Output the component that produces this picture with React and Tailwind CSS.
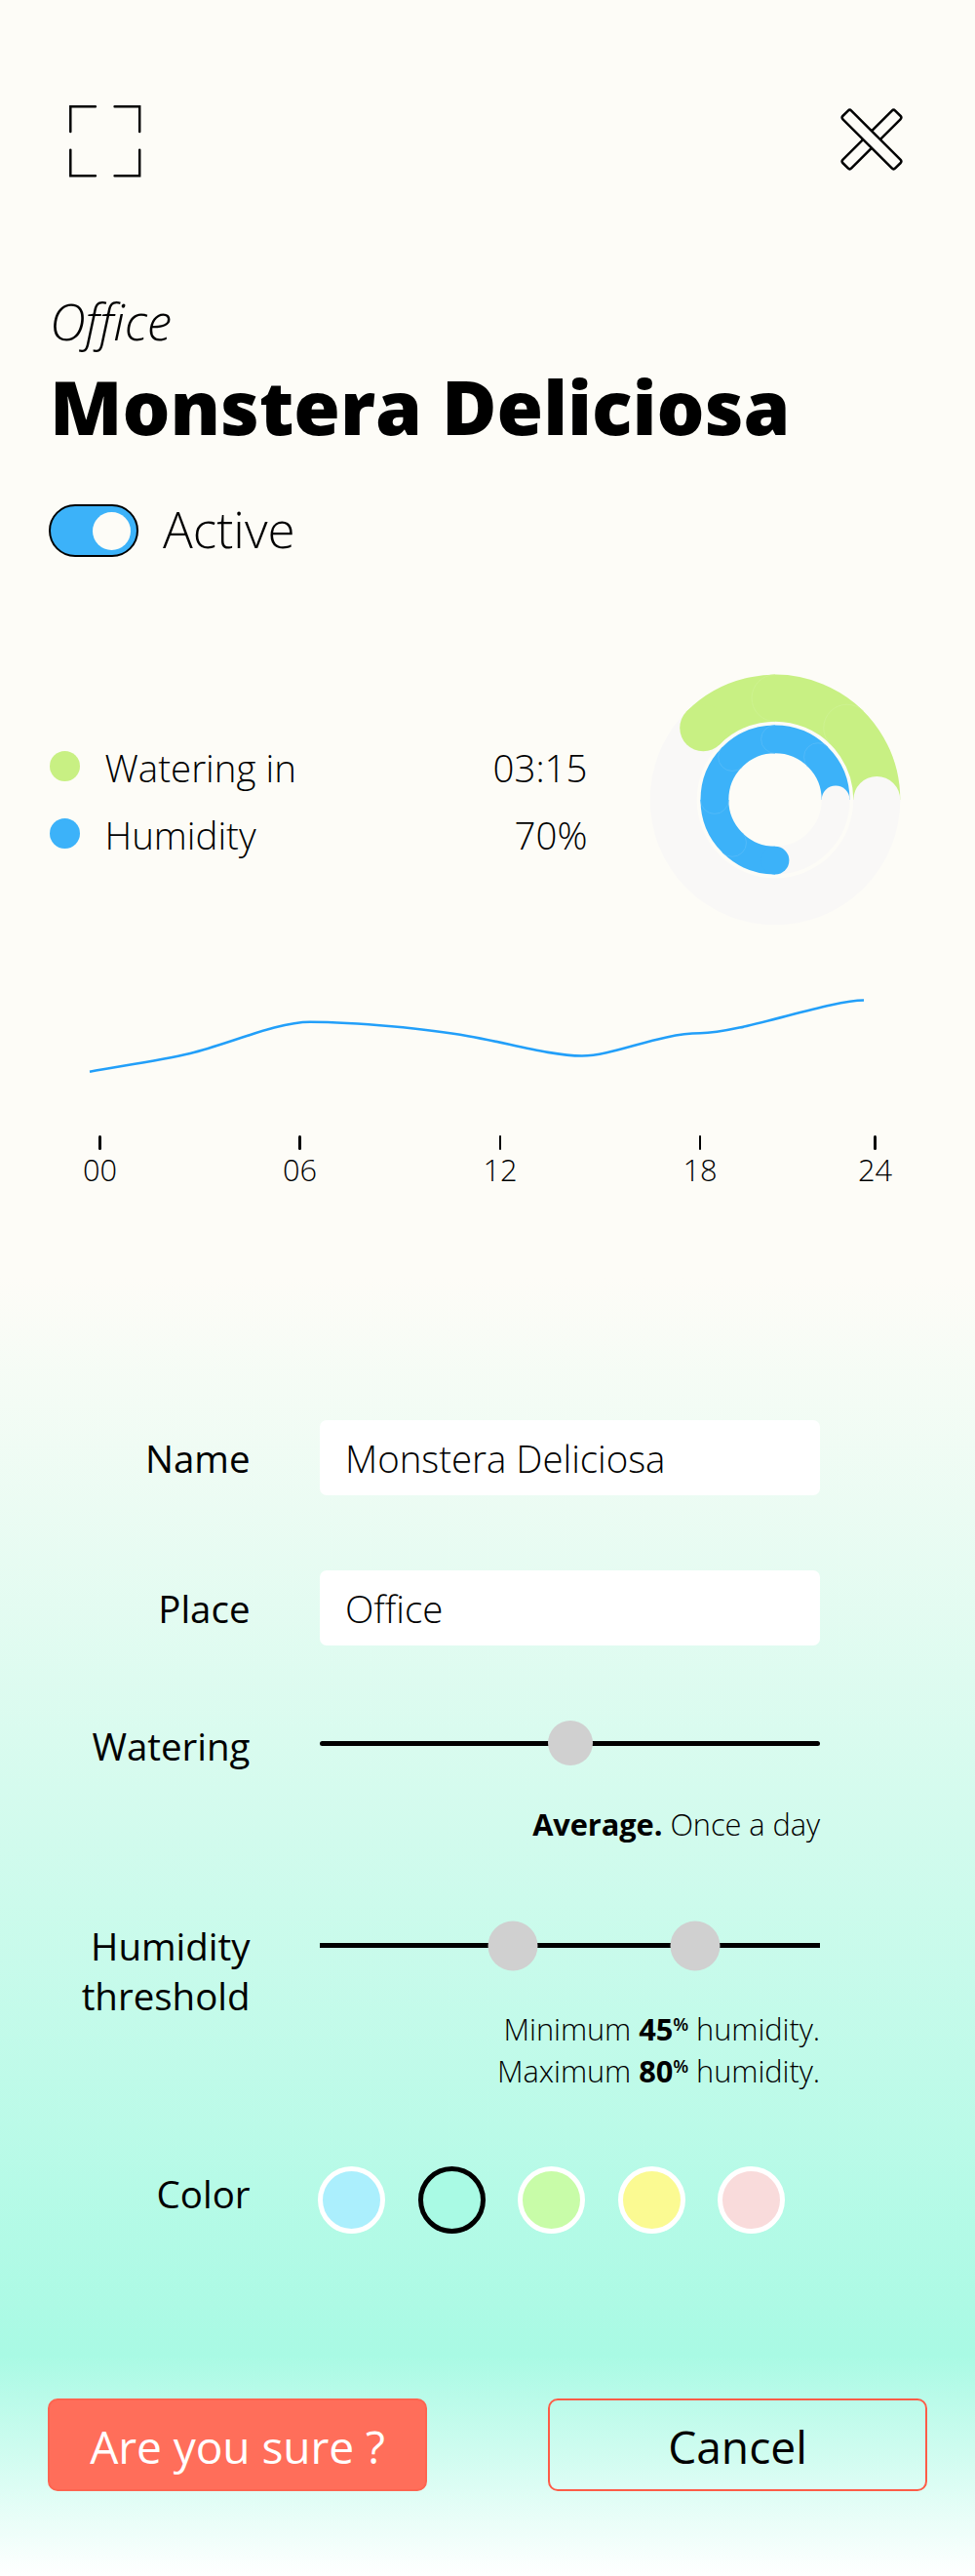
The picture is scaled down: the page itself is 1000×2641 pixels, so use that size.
const FONT = "font-['Open_Sans',sans-serif]";

function ExpandIcon() {
  return (
    <svg className="block w-[74px] h-[74px]" viewBox="0 0 74 74" fill="none" stroke="#000" strokeWidth="2.5" strokeLinecap="round">
      <path d="M1 27V1H27M47 1H73V27M73 46V73H47M27 73H1V46" transform="translate(.3 .3) scale(.985)" />
    </svg>
  );
}

function CloseIcon() {
  return (
    <svg className="block w-[66px] h-[66px]" viewBox="-33 -33 66 66" fill="#fdfcf7" stroke="#000" strokeWidth="2.5">
      <rect x="-38" y="-6.2" width="76" height="12.4" rx="2.5" transform="rotate(-45)" />
      <rect x="-38" y="-6.2" width="76" height="12.4" rx="2.5" transform="rotate(45)" />
    </svg>
  );
}

function Seam({ angle, radius, cap, color }) {
  return (
    <path
      d={`M${radius + cap} 0A${cap} ${cap} 0 0 0 ${radius - cap} 0`}
      transform={`rotate(${-angle})`}
      fill="none"
      stroke={color}
      strokeWidth="0.8"
    />
  );
}

function Donut() {
  return (
    <svg className="block w-[260px] h-[260px]" viewBox="-130 -130 260 260" fill="none">
      <circle r="104.3" stroke="#f9f8f7" strokeWidth="48" />
      <circle r="62.1" stroke="#f9f8f7" strokeWidth="28.8" />
      <path d="M104.3 0A104.3 104.3 0 0 0 -73.75 -73.75" stroke="#c8f083" strokeWidth="48" />
      <circle cx="-73.75" cy="-73.75" r="24" fill="#c8f083" />
      <path d="M62.1 0A62.1 62.1 0 1 0 0 62.1" stroke="#3cb2f9" strokeWidth="28.8" />
      <circle cx="0" cy="62.1" r="14.4" fill="#3cb2f9" />
      <circle cx="104.3" cy="0" r="24" fill="#f9f8f7" />
      <circle cx="62.1" cy="0" r="14.4" fill="#f9f8f7" />
      {[45, 90].map((a) => <Seam key={a} angle={a} radius={104.3} cap={24} color="#cef292" />)}
      {[45, 90, 135, 180, 225].map((a) => <Seam key={a} angle={a} radius={62.1} cap={14.4} color="#55bbf9" />)}
    </svg>
  );
}

function Metric({ dot, label, value }) {
  return (
    <div className="flex h-[69px] items-center text-[38.46px] leading-[52px] font-light">
      <span className={`-mt-[3px] size-[31px] rounded-full ${dot}`} />
      <span className="ml-[25.5px]">{label}</span>
      <span className="ml-auto">{value}</span>
    </div>
  );
}

function Row({ label, className, children }) {
  return (
    <div className={`flex ${className}`}>
      <div className="w-[256.5px] shrink-0 pt-[14px] text-right text-[38.46px] leading-[51.3px]">{label}</div>
      <div className="ml-[71.5px] w-[513px]">{children}</div>
    </div>
  );
}

function Field({ value }) {
  return (
    <div className="flex h-[77px] items-center rounded-[7px] bg-white pt-[2px] pl-[26px] text-[38.46px] tracking-[-0.04px] font-light">{value}</div>
  );
}

function Thumb({ className }) {
  return <span className={`absolute top-1/2 -translate-x-1/2 -translate-y-1/2 rounded-full bg-[#d0d0d0] ${className}`} />;
}

function Percent({ value }) {
  return (
    <b className="font-bold">
      {value}
      <span className="relative -top-[10px] text-[18.5px] leading-none font-semibold">%</span>
    </b>
  );
}

const HOURS = [
  { label: "00", width: "w-[205px]" },
  { label: "06", width: "w-[205.5px]" },
  { label: "12", width: "w-[205px]" },
  { label: "18", width: "w-[179.5px]" },
  { label: "24", width: "w-0" },
];

const SWATCHES = [
  "bg-[#abeffd] border-white",
  "bg-[#a9fae4] border-black",
  "bg-[#c8fca8] border-white",
  "bg-[#fbfa92] border-white",
  "bg-[#f9dbdb] border-white",
];

export default function App() {
  return (
    <div className={`${FONT} h-[2641px] w-[1000px] overflow-hidden bg-[linear-gradient(180deg,#fdfcf7_0px,#fdfcf7_1310px,#a9fae4_2415px,#ffffff_2641px)] text-black`}>
      <header className="flex h-[290px] items-start justify-between pt-[108px] pr-[73px] pl-[71px]">
        <ExpandIcon />
        <div className="pt-[2px]"><CloseIcon /></div>
      </header>

      <section className="pl-[51px]">
        <p className="h-[78px] text-[51.28px] leading-[78px] tracking-[-0.2px] font-light italic [font-variant-ligatures:common-ligatures]">Office</p>
        <h1 className="mt-[-4px] h-[105px] text-[77px] leading-[105px] font-extrabold">Monstera Deliciosa</h1>
        <div className="mt-[48px] flex h-[54px] items-center">
          <span className="-ml-px flex h-[54px] w-[92px] items-center justify-end rounded-full border-[2.5px] border-black bg-[#3cb2f9] pr-[6px]">
            <span className="size-[39px] rounded-full bg-[#fdfcf7]" />
          </span>
          <span className="-mt-[4px] ml-[25px] text-[51.28px] leading-[70px] font-light">Active</span>
        </div>
      </section>

      <section className="mt-[119px] flex h-[260px] pl-[51px]">
        <div className="w-[551.5px] pt-[62.5px]">
          <Metric dot="bg-[#c8f083]" label="Watering in" value="03:15" />
          <Metric dot="bg-[#3cb2f9]" label="Humidity" value="70%" />
        </div>
        <div className="ml-[62.5px]"><Donut /></div>
      </section>

      <section className="mt-[60px]">
        <svg className="block h-[100px] w-[1000px]" viewBox="0 1010 1000 100" fill="none" stroke="#229ff9" strokeWidth="2.6">
          <path d="M92 1098.7C130 1092 165 1087 195 1080C235 1070 285 1047.7 318 1047.7C365 1047.7 440 1055 480 1062.2C520 1069 565 1082.5 597 1082.5C630 1082.5 675 1059.5 718 1059.3C760 1059 850 1025.5 886 1025.5" />
        </svg>
        <div className="mt-[53.5px] flex pl-[102.5px]">
          {HOURS.map(({ label, width }) => (
            <div key={label} className={`${width} shrink-0`}>
              <div className="flex w-[80px] -translate-x-1/2 flex-col items-center">
                <span className="h-[15.5px] w-[2.6px] rounded-full bg-black" />
                <span className="mt-[-1px] text-[30.77px] leading-[42px] font-light">{label}</span>
              </div>
            </div>
          ))}
        </div>
      </section>

      <section className="mt-[236px]">
        <Row label="Name" className="h-[154px]"><Field value="Monstera Deliciosa" /></Row>
        <Row label="Place" className="h-[140.5px]"><Field value="Office" /></Row>
        <Row label="Watering" className="h-[205.5px]">
          <div className="relative mt-[34px] h-[5px] rounded-full bg-black">
            <Thumb className="left-1/2 size-[46px]" />
          </div>
          <p className="mt-[59.5px] text-right text-[30.77px] leading-[42px] tracking-[-0.06px] font-light"><b className="font-bold">Average.</b> Once a day</p>
        </Row>
        <Row label={<>Humidity<br />threshold</>} className="h-[254px]">
          <div className="relative mt-[36px] h-[5px] bg-black">
            <Thumb className="left-[197.5px] size-[51px]" />
            <Thumb className="left-[385px] size-[51px]" />
          </div>
          <p className="mt-[61.5px] text-right text-[30.77px] leading-[43.5px] tracking-[-0.06px] font-light">
            Minimum <Percent value="45" /> humidity.<br />
            Maximum <Percent value="80" /> humidity.
          </p>
        </Row>
        <Row label="Color" className="h-[249px]">
          <div className="-ml-[2px] flex gap-[33.5px] pt-[10.5px]">
            {SWATCHES.map((c) => <span key={c} className={`size-[69px] shrink-0 rounded-full border-[5px] ${c}`} />)}
          </div>
        </Row>
      </section>

      <footer className="flex justify-between pr-[49px] pl-[49px] text-[46.15px] leading-[63px]">
        <button className="flex h-[95px] w-[389px] items-center justify-center rounded-[10px] border-2 border-[#ff6450] bg-[#ff6e5a] pt-[3px] tracking-[-0.1px] text-white">Are you sure ?</button>
        <button className="flex h-[95px] w-[389px] items-center justify-center rounded-[10px] border-[2.5px] border-[#ff5c47] pt-[3px]">Cancel</button>
      </footer>
    </div>
  );
}
